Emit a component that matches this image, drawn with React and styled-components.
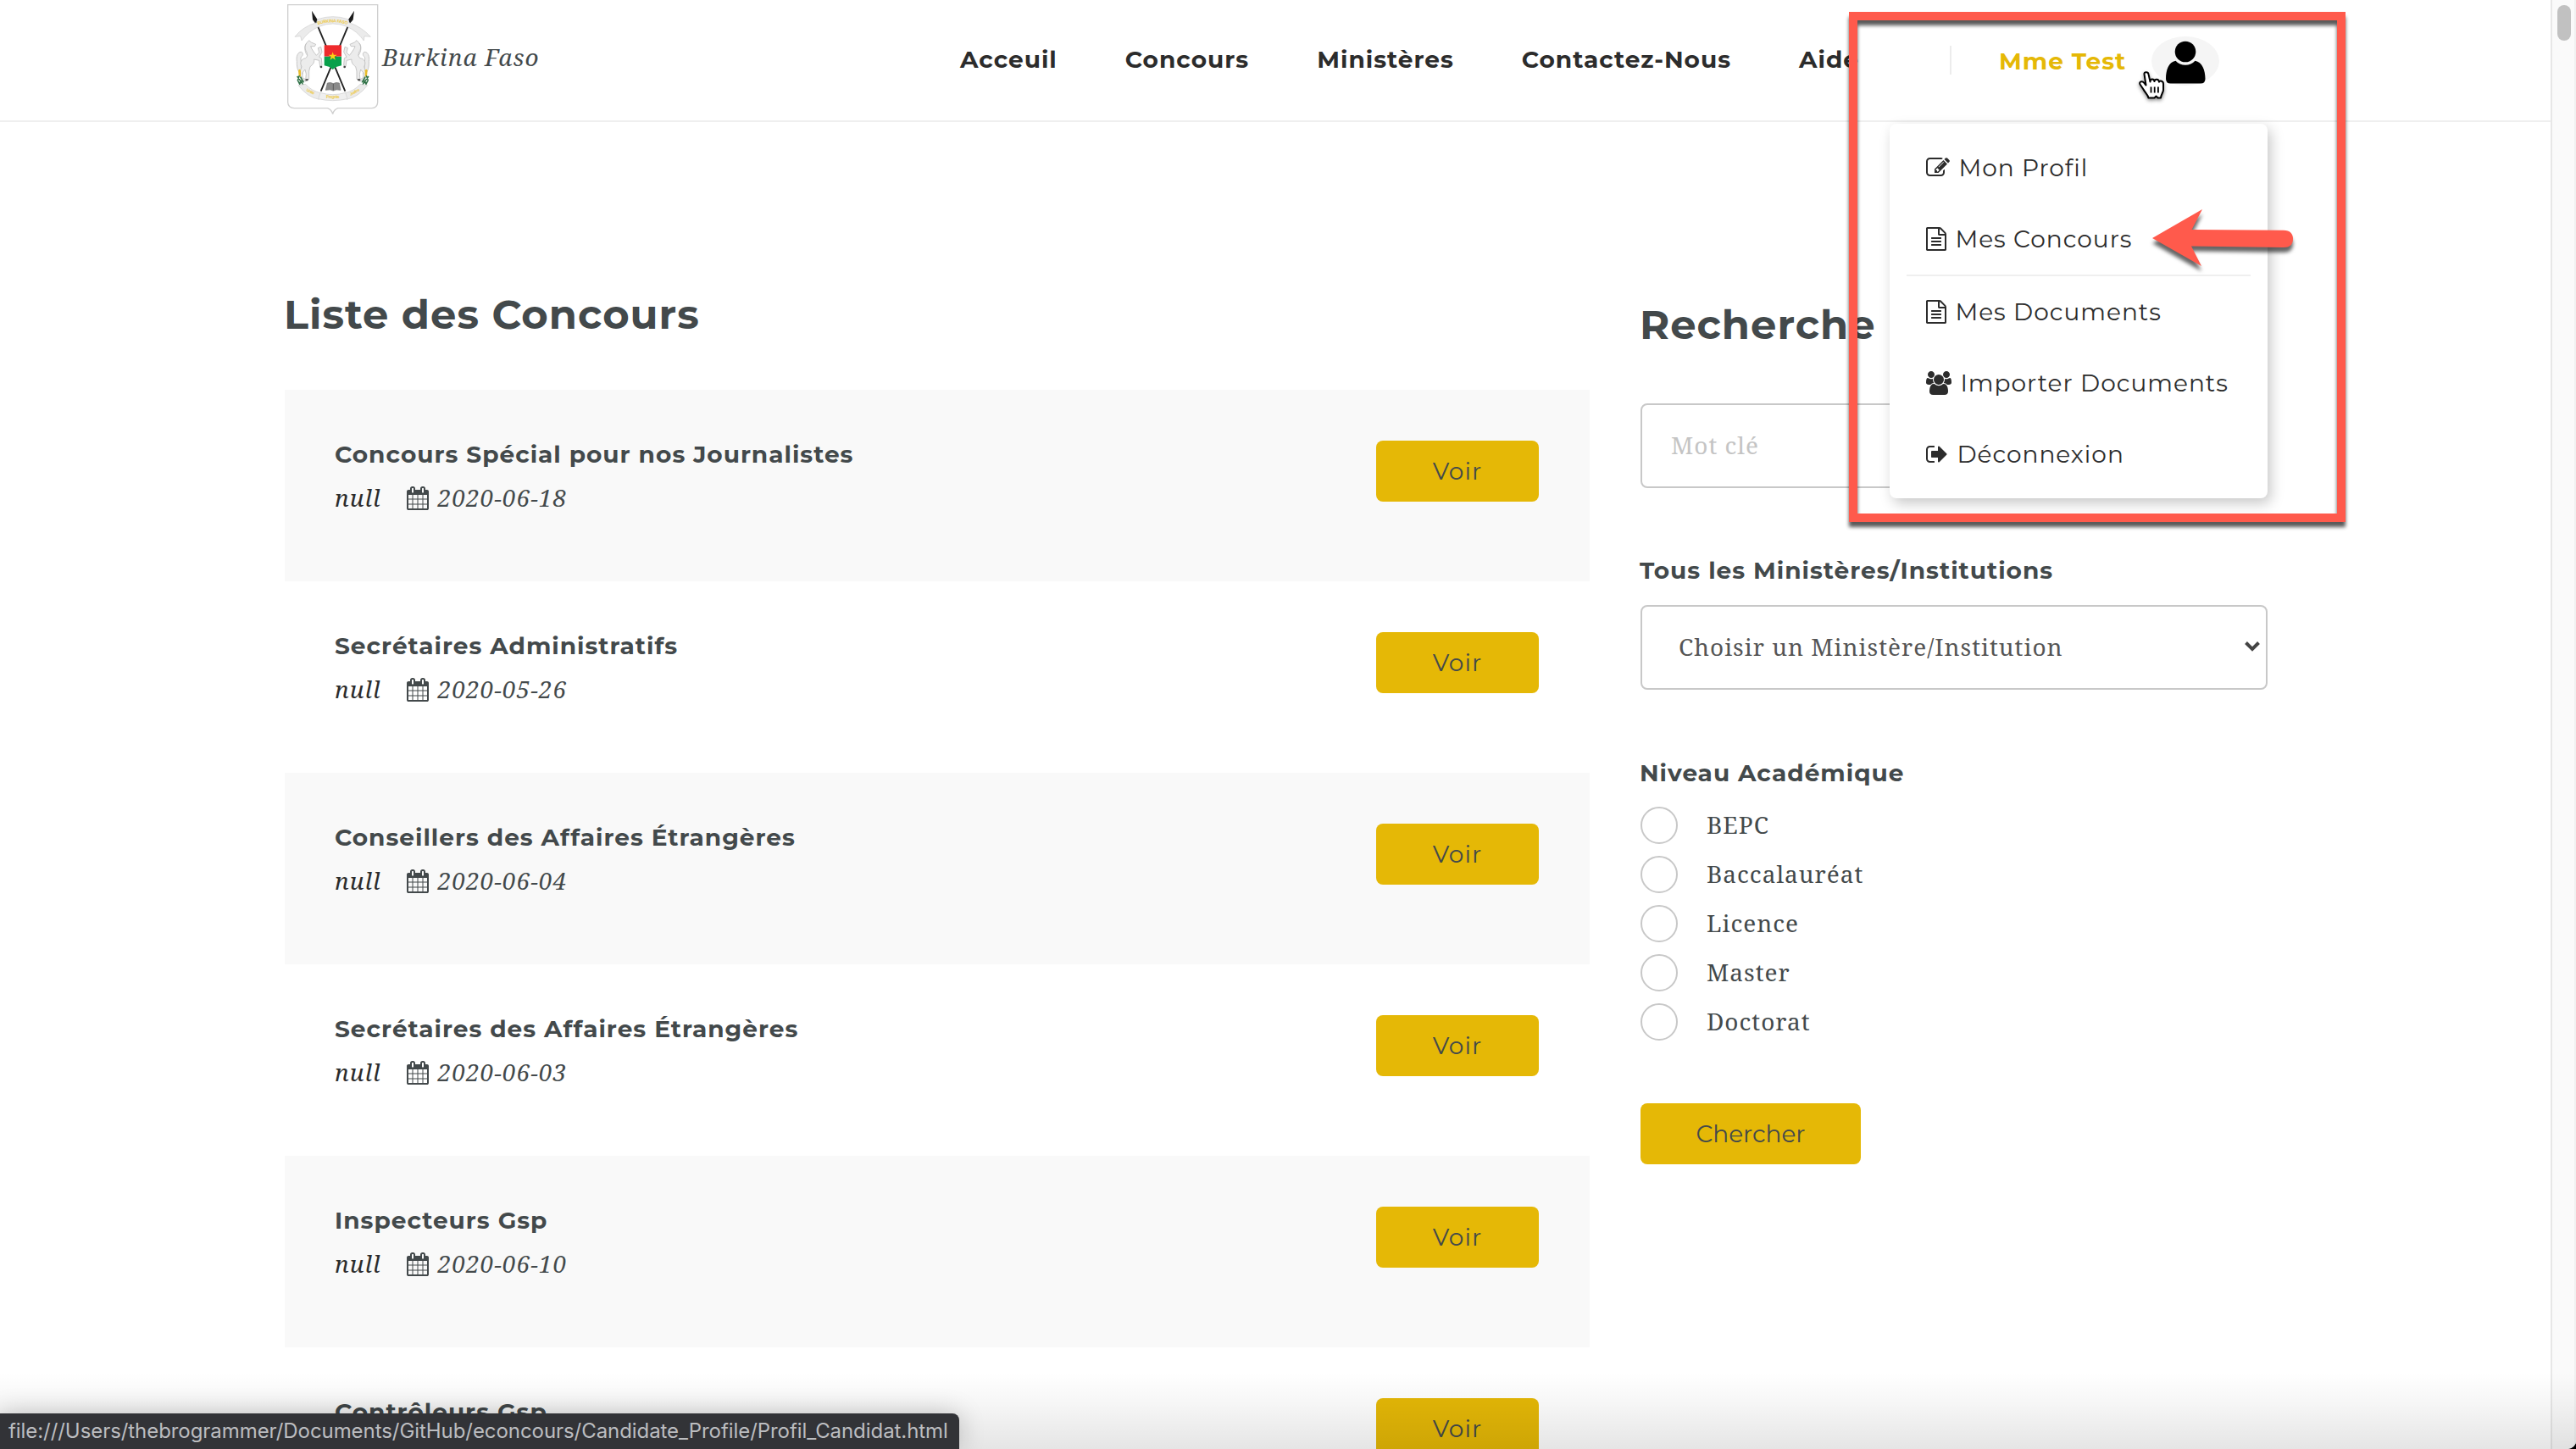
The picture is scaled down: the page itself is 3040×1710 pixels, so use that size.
import React from "react";
import styled, { createGlobalStyle, css } from "styled-components";

const sans = `Montserrat, Inter, "Open Sans", sans-serif`;
const serif = `"Noto Serif", "DejaVu Serif Condensed", "DejaVu Serif", serif`;
const gold = "#e5b806";
const slate = "#43494b";
const ink = "#2c2c2c";
const line = "#c8c8c8";
const red = "#ff5a4c";

const Global = createGlobalStyle`
  * { box-sizing: border-box; }
  html { background: #000; }
  body { margin: 0; }
`;

const Frame = styled.div`
  position: relative;
  display: flex;
  width: 3040px;
  height: 1710px;
  overflow: hidden;
  background: #fff;
  border-bottom-right-radius: 10px;
  color: ${slate};
  font: 400 28px ${serif};
  letter-spacing: 1px;
  white-space: nowrap;
`;

const Page = styled.div`
  width: 3010px;
  display: flex;
  flex-direction: column;
`;

/* ---------- header ---------- */
const Header = styled.header`
  display: flex;
  flex: none;
  height: 144px;
  padding-left: 339px;
  border-bottom: 2px solid #efefef;
`;

const Brand = styled.div`
  display: flex;
  width: 794px;
  padding-top: 5px;
  gap: 4px;
`;

const BrandName = styled.span`
  font-style: italic;
  line-height: 40px;
  margin-top: 42px;
`;

const Nav = styled.nav`
  display: flex;
  gap: 80px;
  width: 1168px;
`;

const NavLink = styled.a`
  font: 700 28px/140px ${sans};
  color: ${ink};
`;

const User = styled.div`
  display: flex;
  align-items: center;
  height: 142px;
  gap: 30px;
`;

const UserDivider = styled.span`
  width: 2px;
  height: 34px;
  margin-right: 26px;
  background: #ececec;
`;

const UserName = styled.span`
  font: 700 28px/40px ${sans};
  color: ${gold};
  margin-top: 2px;
`;

const Avatar = styled.div`
  width: 80px;
  height: 58px;
  margin-top: 2px;
  border-radius: 50%;
  background: #f5f5f5;
`;

/* ---------- content ---------- */
const Content = styled.main`
  display: flex;
  gap: 60px;
  padding-left: 336px;
`;

const ListColumn = styled.section`
  width: 1540px;
  padding-top: 197px;
`;

const SearchColumn = styled.section`
  width: 740px;
  padding-top: 209px;
`;

const Heading = styled.h2`
  margin: 0 0 ${(p) => p.$below}px -1px;
  font: 700 48px/60px ${sans};
`;

const Row = styled.article`
  display: flex;
  justify-content: space-between;
  height: 226px;
  padding: 56px 60px 0 59px;
  &:nth-of-type(odd) {
    background: #f9f9f9;
  }
`;

const RowTitle = styled.h4`
  margin: 0 0 11px;
  font: 700 28px/40px ${sans};
`;

const Meta = styled.div`
  display: flex;
  font-style: italic;
  line-height: 40px;
`;

const Organisation = styled.span`
  color: ${ink};
  margin-right: 30px;
`;

const MetaIcon = styled.span`
  display: flex;
  align-items: center;
  padding-top: 2px;
  margin-right: 11px;
`;

const Button = styled.button`
  display: block;
  width: ${(p) => p.$width}px;
  height: 72px;
  margin-top: ${(p) => p.$top}px;
  padding: 0;
  border: 0;
  border-radius: 8px;
  background: ${gold};
  color: ${slate};
  font: 400 28px/72px ${sans};
  letter-spacing: ${(p) => (p.$tight ? 0 : 1)}px;
`;

const field = css`
  display: flex;
  align-items: center;
  width: 740px;
  height: 100px;
  border: 2px solid ${line};
  border-radius: 8px;
  background: #fff;
  font: 400 28px ${serif};
  letter-spacing: 1px;
`;

const Input = styled.input`
  ${field}
  padding: 0 34px 2px;
  &::placeholder {
    color: #c4c4c4;
    opacity: 1;
  }
`;

const Select = styled.div`
  ${field}
  justify-content: space-between;
  padding: 0 7px 2px 43px;
  color: #555;
`;

const Label = styled.h4`
  margin: ${(p) => p.$above}px 0 ${(p) => p.$below}px -1px;
  font: 700 28px/40px ${sans};
`;

const Radios = styled.div`
  display: flex;
  flex-direction: column;
  gap: 14px;
`;

const Radio = styled.label`
  display: flex;
  gap: 34px;
  height: 44px;
  line-height: 42px;
`;

const Dot = styled.span`
  width: 44px;
  height: 44px;
  border: 2px solid ${line};
  border-radius: 50%;
`;

/* ---------- account menu ---------- */
const Menu = styled.div`
  position: absolute;
  left: 2230px;
  top: 146px;
  width: 446px;
  padding: 10px 0;
  border-radius: 8px;
  background: #fff;
  box-shadow: 4px 6px 16px rgba(0, 0, 0, 0.22);
`;

const MenuItem = styled.a`
  display: flex;
  align-items: center;
  gap: 10.4px;
  padding-left: 43px;
  font: 400 28px/84px ${sans};
  color: ${ink};
`;

const MenuDivider = styled.div`
  height: 2px;
  margin: 0 20px;
  background: #efefef;
`;

/* ---------- annotations ---------- */
const Highlight = styled.div`
  position: absolute;
  left: 2182px;
  top: 14px;
  width: 586px;
  height: 602px;
  border: 10px solid ${red};
  filter: drop-shadow(0 6px 2px rgba(0, 0, 0, 0.65));
`;

const Overlay = styled.svg`
  position: absolute;
  left: ${(p) => p.$x}px;
  top: ${(p) => p.$y}px;
  overflow: visible;
  filter: drop-shadow(0 ${(p) => p.$drop}px 2px rgba(0, 0, 0, ${(p) => p.$dark}));
`;

/* ---------- browser chrome ---------- */
const Scrollbar = styled.div`
  width: 30px;
  padding: 6px 0 0 6px;
  border-left: 2px solid #e7e7e7;
  border-right: 2px solid #f1f1f1;
  background: #fafafa;
`;

const Thumb = styled.div`
  width: 16px;
  height: 42px;
  border-radius: 8px;
  background: #c1c1c1;
`;

const BottomShade = styled.div`
  position: absolute;
  left: 0;
  right: 0;
  bottom: 0;
  height: 90px;
  background: linear-gradient(rgba(0, 0, 0, 0), rgba(0, 0, 0, 0.035) 40%, rgba(0, 0, 0, 0.1));
`;

const StatusBar = styled.div`
  position: absolute;
  left: 0;
  bottom: 0;
  width: 1132px;
  height: 42px;
  padding-left: 10px;
  border-top-right-radius: 8px;
  background: #323337;
  box-shadow: 0 0 30px rgba(0, 0, 0, 0.22);
  color: #bcbdc0;
  font: 400 24px/42px Inter, Roboto, sans-serif;
  letter-spacing: -0.065px;
`;

/* ---------- icons ---------- */
const glyphs = {
  edit: {
    box: "0 0 1792 1792",
    d: "M888 1184l116-116-152-152-116 116v56h96v96h56zm440-720q-16-16-33 1l-350 350q-17 17-1 33t33-1l350-350q17-17 1-33zm80 594v190q0 119-84.5 203.5t-203.5 84.5h-832q-119 0-203.5-84.5t-84.5-203.5v-832q0-119 84.5-203.5t203.5-84.5h832q63 0 117 25 15 7 18 23 3 17-9 29l-49 49q-14 14-32 8-23-6-45-6h-832q-66 0-113 47t-47 113v832q0 66 47 113t113 47h832q66 0 113-47t47-113v-126q0-13 9-22l64-64q15-15 35-7t20 29zm-96-738l288 288-672 672h-288v-288zm444 132l-92 92-288-288 92-92q28-28 68-28t68 28l152 152q28 28 28 68t-28 68z",
  },
  file: {
    box: "128 0 1536 1792",
    d: "M1596 380q28 28 48 76t20 88v1152q0 40-28 68t-68 28h-1344q-40 0-68-28t-28-68v-1600q0-40 28-68t68-28h896q40 0 88 20t76 48zm-444-244v376h376q-10-29-22-41l-313-313q-12-12-41-22zm384 1528v-1024h-416q-40 0-68-28t-28-68v-416h-768v1536h1280zm-1024-864q0-14 9-23t23-9h704q14 0 23 9t9 23v64q0 14-9 23t-23 9h-704q-14 0-23-9t-9-23v-64zm736 224q14 0 23 9t9 23v64q0 14-9 23t-23 9h-704q-14 0-23-9t-9-23v-64q0-14 9-23t23-9h704zm0 256q14 0 23 9t9 23v64q0 14-9 23t-23 9h-704q-14 0-23-9t-9-23v-64q0-14 9-23t23-9h704z",
  },
  users: {
    box: "-64 0 1920 1792",
    d: "M529 896q-162 5-265 128h-134q-82 0-138-40.5t-56-118.5q0-353 124-353 6 0 43.5 21t97.5 42.5 119 21.5q67 0 133-23-5 37-5 66 0 139 81 256zm1071 637q0 120-73 189.5t-194 69.5h-874q-121 0-194-69.5t-73-189.5q0-53 3.5-103.5t14-109 26.5-108.5 43-97.5 62-81 85.5-53.5 111.5-20q10 0 43 21.5t73 48 107 48 135 21.5 135-21.5 107-48 73-48 43-21.5q61 0 111.5 20t85.5 53.5 62 81 43 97.5 26.5 108.5 14 109 3.5 103.5zm-1024-1277q0 106-75 181t-181 75-181-75-75-181 75-181 181-75 181 75 75 181zm704 384q0 159-112.5 271.5t-271.5 112.5-271.5-112.5-112.5-271.5 112.5-271.5 271.5-112.5 271.5 112.5 112.5 271.5zm576 225q0 78-56 118.5t-138 40.5h-134q-103-123-265-128 81-117 81-256 0-29-5-66 66 23 133 23 59 0 119-21.5t97.5-42.5 43.5-21q124 0 124 353zm-128-609q0 106-75 181t-181 75-181-75-75-181 75-181 181-75 181 75 75 181z",
  },
  signout: {
    box: "64 0 1664 1792",
    d: "M704 1440q0 4 1 20t.5 26.5-3 23.5-10 19.5-20.5 6.5h-320q-119 0-203.5-84.5t-84.5-203.5v-704q0-119 84.5-203.5t203.5-84.5h320q13 0 22.5 9.5t9.5 22.5q0 4 1 20t.5 26.5-3 23.5-10 19.5-20.5 6.5h-320q-66 0-113 47t-47 113v704q0 66 47 113t113 47h312l11.5 1 11.5 3 8 5.5 7 9 2 13.5zm928-544q0 26-19 45l-544 544q-19 19-45 19t-45-19-19-45v-288h-448q-26 0-45-19t-19-45v-384q0-26 19-45t45-19h448v-288q0-26 19-45t45-19 45 19l544 544q19 19 19 45z",
  },
  calendar: {
    box: "64 0 1664 1792",
    d: "M192 1664h288v-288h-288v288zm352 0h320v-288h-320v288zm-352-352h288v-320h-288v320zm352 0h320v-320h-320v320zm-352-384h288v-288h-288v288zm736 736h320v-288h-320v288zm-384-736h320v-288h-320v288zm768 736h288v-288h-288v288zm-384-352h320v-320h-320v320zm-352-864v-288q0-13-9.5-22.5t-22.5-9.5h-64q-13 0-22.5 9.5t-9.5 22.5v288q0 13 9.5 22.5t22.5 9.5h64q13 0 22.5-9.5t9.5-22.5zm736 864h288v-320h-288v320zm-384-384h320v-288h-320v288zm384 0h288v-288h-288v288zm32-480v-288q0-13-9.5-22.5t-22.5-9.5h-64q-13 0-22.5 9.5t-9.5 22.5v288q0 13 9.5 22.5t22.5 9.5h64q13 0 22.5-9.5t9.5-22.5zm384-64v1280q0 52-38 90t-90 38h-1408q-52 0-90-38t-38-90v-1280q0-52 38-90t90-38h128v-96q0-66 47-113t113-47h64q66 0 113 47t47 113v96h384v-96q0-66 47-113t113-47h64q66 0 113 47t47 113v96h128q52 0 90 38t38 90z",
  },
};

function Glyph({ name }) {
  const { box, d } = glyphs[name];
  return (
    <svg width={Number(box.split(" ")[2]) / 64} height="28" viewBox={box} fill="currentColor">
      <path d={d} />
    </svg>
  );
}

function Horse() {
  return (
    <g fill="#ececec" stroke="#bdbdbd" strokeWidth="2.5" strokeLinejoin="round">
      <path d="M82 262 C66 262 60 240 61 218 C58 200 64 184 76 184 C84 186 84 196 76 202 C72 210 80 222 76 236Z" />
      <path d="M96 152 L104 143 L112 150 L128 157 L124 164 L110 164 C113 174 122 186 130 196 L140 186 L136 170 L146 166 L150 184 L140 202 L148 206 L150 232 L143 236 L140 214 L122 210 C124 222 116 230 108 236 L104 252 L104 280 L92 282 L94 262 L90 246 L80 258 L82 276 L98 284 L92 288 L74 280 L72 254 L78 236 C70 222 76 208 92 206 C100 200 100 190 92 178 C88 168 90 158 96 152Z" />
      <path d="M96 152 C86 162 88 184 98 196" fill="none" />
      <circle cx="147" cy="237" r="4" fill="#444" stroke="none" />
      <path d="M92 280h10l-2 6h-9z" fill="#444" stroke="none" />
    </g>
  );
}

function CoatOfArms() {
  return (
    <svg width="108" height="133" viewBox="27 15 324 399">
      <path
        d="M29 17H347V362Q346 382 326 383H206Q192 388 188 404Q184 388 170 383H52Q30 382 29 362Z"
        fill="#fff"
        stroke="#cfcfcf"
        strokeWidth="4"
      />
      <g stroke="#222" strokeWidth="5.5">
        <path d="M122 62L232 323" />
        <path d="M255 62L146 323" />
      </g>
      <path d="M114 38L134 70L126 82L117 70Z M264 38L260 70L250 82L243 70Z" fill="#1c1c1c" />
      <path
        d="M135 68Q188 50 242 68L246 80Q290 95 322 130L300 128L298 144Q275 110 238 94Q188 74 140 94Q104 108 78 144L74 128L54 130Q84 92 132 80Z"
        fill="#ebebeb"
        stroke="#cdcdcd"
        strokeWidth="2"
      />
      <path id="topRibbon" d="M136 88Q188 70 244 88" fill="none" />
      <text fontFamily="Inter, sans-serif" fontSize="15" fontWeight="700" letterSpacing="0" fill="#eecb4e">
        <textPath href="#topRibbon" textLength="106">BURKINA FASO</textPath>
      </text>
      <Horse />
      <g transform="translate(377 0) scale(-1 1)">
        <Horse />
      </g>
      <path d="M158 160H219V200H158Z" fill="#ef2b2d" />
      <path d="M158 200H219V232L200 237L188 246L177 237L158 232Z" fill="#08a04b" />
      <path d="M188 184L191.500 194.500H203L194 201L197.500 212L188 205.500L178.500 212L182 201L173 194.500H184.500Z" fill="#fcd116" />
      <path d="M169 294Q180 290 190 296Q200 290 211 294L216 319Q200 315 190 321Q180 315 163 319Z" fill="#8b8b8b" stroke="#6f6f6f" strokeWidth="2" />
      <path d="M190 296V320" stroke="#444" strokeWidth="2" />
      {[0, 1].map((side) => (
        <g key={side} transform={side ? "translate(377 0) scale(-1 1)" : undefined}>
          <path d="M66 250Q70 240 75 250V272L68 270Z" fill="#e9bd2c" />
          <path d="M70 268L64 284L72 300M74 272L84 290L66 292M62 270L72 284L86 304M78 284L72 296" fill="none" stroke="#2f7146" strokeWidth="4.500" />
          <path d="M66 302Q80 300 92 298Q112 322 148 330L140 352Q98 344 66 302Z" fill="#ebebeb" stroke="#cdcdcd" strokeWidth="2" />
        </g>
      ))}
      <path d="M144 328Q188 342 233 328L240 350Q188 362 137 350Z" fill="#efefef" stroke="#cdcdcd" strokeWidth="2" />
      <g fontFamily="Inter, sans-serif" fontSize="14" fontWeight="700" letterSpacing="0" fill="#eecb4e">
        <text transform="translate(94 322) rotate(26)" textLength="30">Unité</text>
        <text x="165" y="347" textLength="47">Progrès</text>
        <text transform="translate(251 339) rotate(-28)" textLength="38">Justice</text>
      </g>
    </svg>
  );
}

const contests = [
  ["Concours Spécial pour nos Journalistes", "2020-06-18"],
  ["Secrétaires Administratifs", "2020-05-26"],
  ["Conseillers des Affaires Étrangères", "2020-06-04"],
  ["Secrétaires des Affaires Étrangères", "2020-06-03"],
  ["Inspecteurs Gsp", "2020-06-10"],
  ["Contrôleurs Gsp", "2020-06-10"],
];

const levels = ["BEPC", "Baccalauréat", "Licence", "Master", "Doctorat"];

export default function App() {
  return (
    <>
      <Global />
      <Frame>
        <Page>
          <Header>
            <Brand>
              <CoatOfArms />
              <BrandName>Burkina Faso</BrandName>
            </Brand>
            <Nav>
              {["Acceuil", "Concours", "Ministères", "Contactez-Nous", "Aide"].map((t) => (
                <NavLink key={t}>{t}</NavLink>
              ))}
            </Nav>
            <User>
              <UserDivider />
              <UserName>Mme Test</UserName>
              <Avatar>
                <svg width="80" height="58" viewBox="0 0 80 58">
                  <circle cx="40" cy="18" r="12.300" />
                  <path d="M28.500 28.700A15.500 15.500 0 0 0 51.500 28.700C60 30 63.500 40 63.500 50Q63.500 55.500 58 55.500H22.500Q17 55.500 17 50C17 40 20 30 28.500 28.700Z" />
                </svg>
              </Avatar>
            </User>
          </Header>
          <Content>
            <ListColumn>
              <Heading $below={59}>Liste des Concours</Heading>
              {contests.map(([title, date]) => (
                <Row key={title}>
                  <div>
                    <RowTitle>{title}</RowTitle>
                    <Meta>
                      <Organisation>null</Organisation>
                      <MetaIcon>
                        <Glyph name="calendar" />
                      </MetaIcon>
                      <span>{date}</span>
                    </Meta>
                  </div>
                  <Button $width={192} $top={4}>
                    Voir
                  </Button>
                </Row>
              ))}
            </ListColumn>
            <SearchColumn>
              <Heading $below={63}>Recherche</Heading>
              <Input placeholder="Mot clé" />
              <Label $above={77} $below={21}>
                Tous les Ministères/Institutions
              </Label>
              <Select>
                <span>Choisir un Ministère/Institution</span>
                <svg width="18" height="12" viewBox="0 0 18 12">
                  <path d="M1.500 1.500L9 9L16.500 1.500" fill="none" stroke="#444" strokeWidth="4" />
                </svg>
              </Select>
              <Label $above={78} $below={20}>
                Niveau Académique
              </Label>
              <Radios>
                {levels.map((t) => (
                  <Radio key={t}>
                    <Dot />
                    {t}
                  </Radio>
                ))}
              </Radios>
              <Button $width={260} $top={74} $tight>
                Chercher
              </Button>
            </SearchColumn>
          </Content>
        </Page>
        <Scrollbar>
          <Thumb />
        </Scrollbar>

        <Menu>
          <MenuItem>
            <Glyph name="edit" />
            Mon Profil
          </MenuItem>
          <MenuItem>
            <Glyph name="file" />
            Mes Concours
          </MenuItem>
          <MenuDivider />
          <MenuItem>
            <Glyph name="file" />
            Mes Documents
          </MenuItem>
          <MenuItem>
            <Glyph name="users" />
            Importer Documents
          </MenuItem>
          <MenuItem>
            <Glyph name="signout" />
            Déconnexion
          </MenuItem>
        </Menu>

        <Overlay $x={2524} $y={84} $drop={2} $dark={0.45} width="31" height="33" viewBox="0 0 31 33">
          <path
            d="M6.500 3.500C6 .5 11 .3 11.500 3.500L13.500 12.500C13.500 8.500 18 8.500 18.500 12C19 8.800 23.500 9 24 12.700C25 10.500 29 11.500 29 15V22C29 25 26.500 27 26 31.500H22.500L20.500 29.500L18.500 31.500H11.500C11 28 7.500 25.500 5.500 21.500L1.500 15.500C0 12.500 4 11 6 13.500L8.500 16.500Z"
            fill="#fff"
            stroke="#000"
            strokeWidth="2"
            strokeLinejoin="round"
          />
          <path d="M14.500 18.500V25.500M18.700 18.500V25.500M22.900 18.500V25.500" stroke="#000" strokeWidth="1.800" />
        </Overlay>
        <Highlight />
        <Overlay $x={2540} $y={247} $drop={6} $dark={0.6} width="167" height="68" viewBox="0 0 167 68">
          <path d="M0 34L59 0L46.500 24L155 24.700Q166 25 166 35Q166 45 155 45L46 43.500L58 67Z" fill={red} />
        </Overlay>

        <BottomShade />
        <StatusBar>
          file:///Users/thebrogrammer/Documents/GitHub/econcours/Candidate_Profile/Profil_Candidat.html
        </StatusBar>
      </Frame>
    </>
  );
}
